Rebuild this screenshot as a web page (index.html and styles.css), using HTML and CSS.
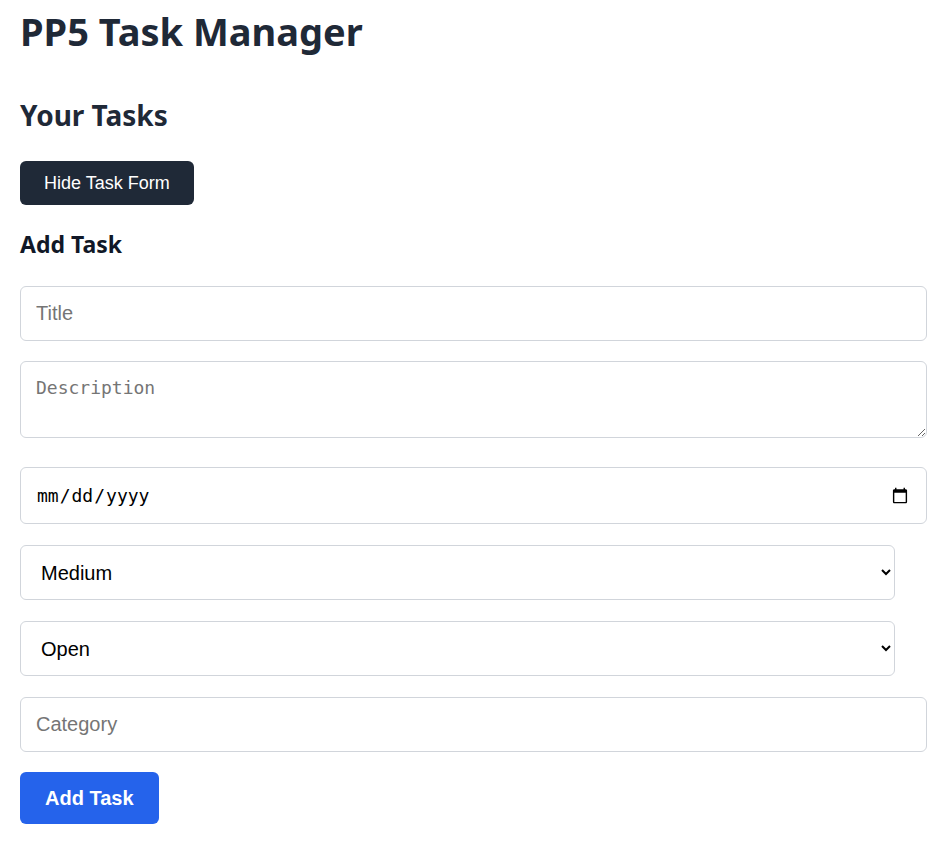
FILE: index.html
```html
<!DOCTYPE html>
<html lang="en">
<head>
<meta charset="utf-8">
<title>PP5 Task Manager</title>
<link rel="stylesheet" href="styles.css">
</head>
<body>
<div class="app">
  <h1 class="title">PP5 Task Manager</h1>
  <h2 class="subtitle">Your Tasks</h2>
  <button class="btn-dark" type="button">Hide Task Form</button>
  <h3 class="form-title">Add Task</h3>
  <form class="task-form">
    <input class="field" type="text" placeholder="Title">
    <textarea class="field area" placeholder="Description"></textarea>
    <input class="field date" type="date">
    <select class="pick">
      <option>Low</option>
      <option selected>Medium</option>
      <option>High</option>
    </select>
    <select class="pick">
      <option selected>Open</option>
      <option>In Progress</option>
      <option>Done</option>
    </select>
    <input class="field" type="text" placeholder="Category">
    <div class="actions"><button class="btn-blue" type="submit">Add Task</button></div>
  </form>
</div>
</body>
</html>
```
FILE: styles.css
```css
html, body {
  margin: 0;
  padding: 0;
  background: #ffffff;
}
.app {
  width: 875px;
  padding: 0 20px;
  font-family: "Noto Sans", "Open Sans", sans-serif;
}
.title {
  margin: 0;
  padding-top: 7px;
  font-size: 38px;
  line-height: 48px;
  font-weight: 700;
  color: #1f2937;
}
.subtitle {
  margin: 43px 0 0;
  font-size: 28px;
  line-height: 34px;
  font-weight: 700;
  color: #1f2937;
}
.btn-dark {
  display: block;
  margin-top: 29px;
  height: 44px;
  padding: 0 24px;
  border: none;
  border-radius: 6px;
  background: #1f2937;
  color: #ffffff;
  font-family: "Liberation Sans", Arial, sans-serif;
  font-size: 18px;
  cursor: pointer;
}
.form-title {
  margin: 24px 0 0;
  font-size: 23px;
  line-height: 30px;
  font-weight: 700;
  color: #111827;
}
.task-form {
  margin-top: 27px;
  display: flex;
  flex-direction: column;
  gap: 20px;
}
.field {
  display: block;
  box-sizing: content-box;
  width: 100%;
  height: 23px;
  padding: 15px;
  margin: 0;
  border: 1px solid #d1d5db;
  border-radius: 6px;
  font-family: "Liberation Sans", Arial, sans-serif;
  font-size: 20px;
  color: #111111;
  background: #ffffff;
}
.field::placeholder {
  color: #757575;
}
.area {
  height: 45px;
  font-family: "DejaVu Sans Mono", "Liberation Mono", monospace;
  font-size: 18px;
  line-height: 22px;
  resize: vertical;
  margin-bottom: 9px;
}
.date {
  height: 25px;
  margin-bottom: 1px;
  font-family: "DejaVu Sans Mono", "Liberation Mono", monospace;
  font-size: 18px;
  color: #000000;
}
.pick {
  display: block;
  box-sizing: border-box;
  width: 100%;
  height: 55px;
  padding: 0 13px 0 16px;
  margin: 0 0 1px;
  border: 1px solid #d1d5db;
  border-radius: 6px;
  font-family: "Liberation Sans", Arial, sans-serif;
  font-size: 20px;
  color: #000000;
  background: #ffffff;
}
.actions {
  display: flex;
}
.btn-blue {
  height: 52px;
  padding: 0 25px;
  border: none;
  border-radius: 6px;
  background: #2563eb;
  color: #ffffff;
  font-family: "Liberation Sans", Arial, sans-serif;
  font-size: 20px;
  font-weight: 700;
  cursor: pointer;
}
```
